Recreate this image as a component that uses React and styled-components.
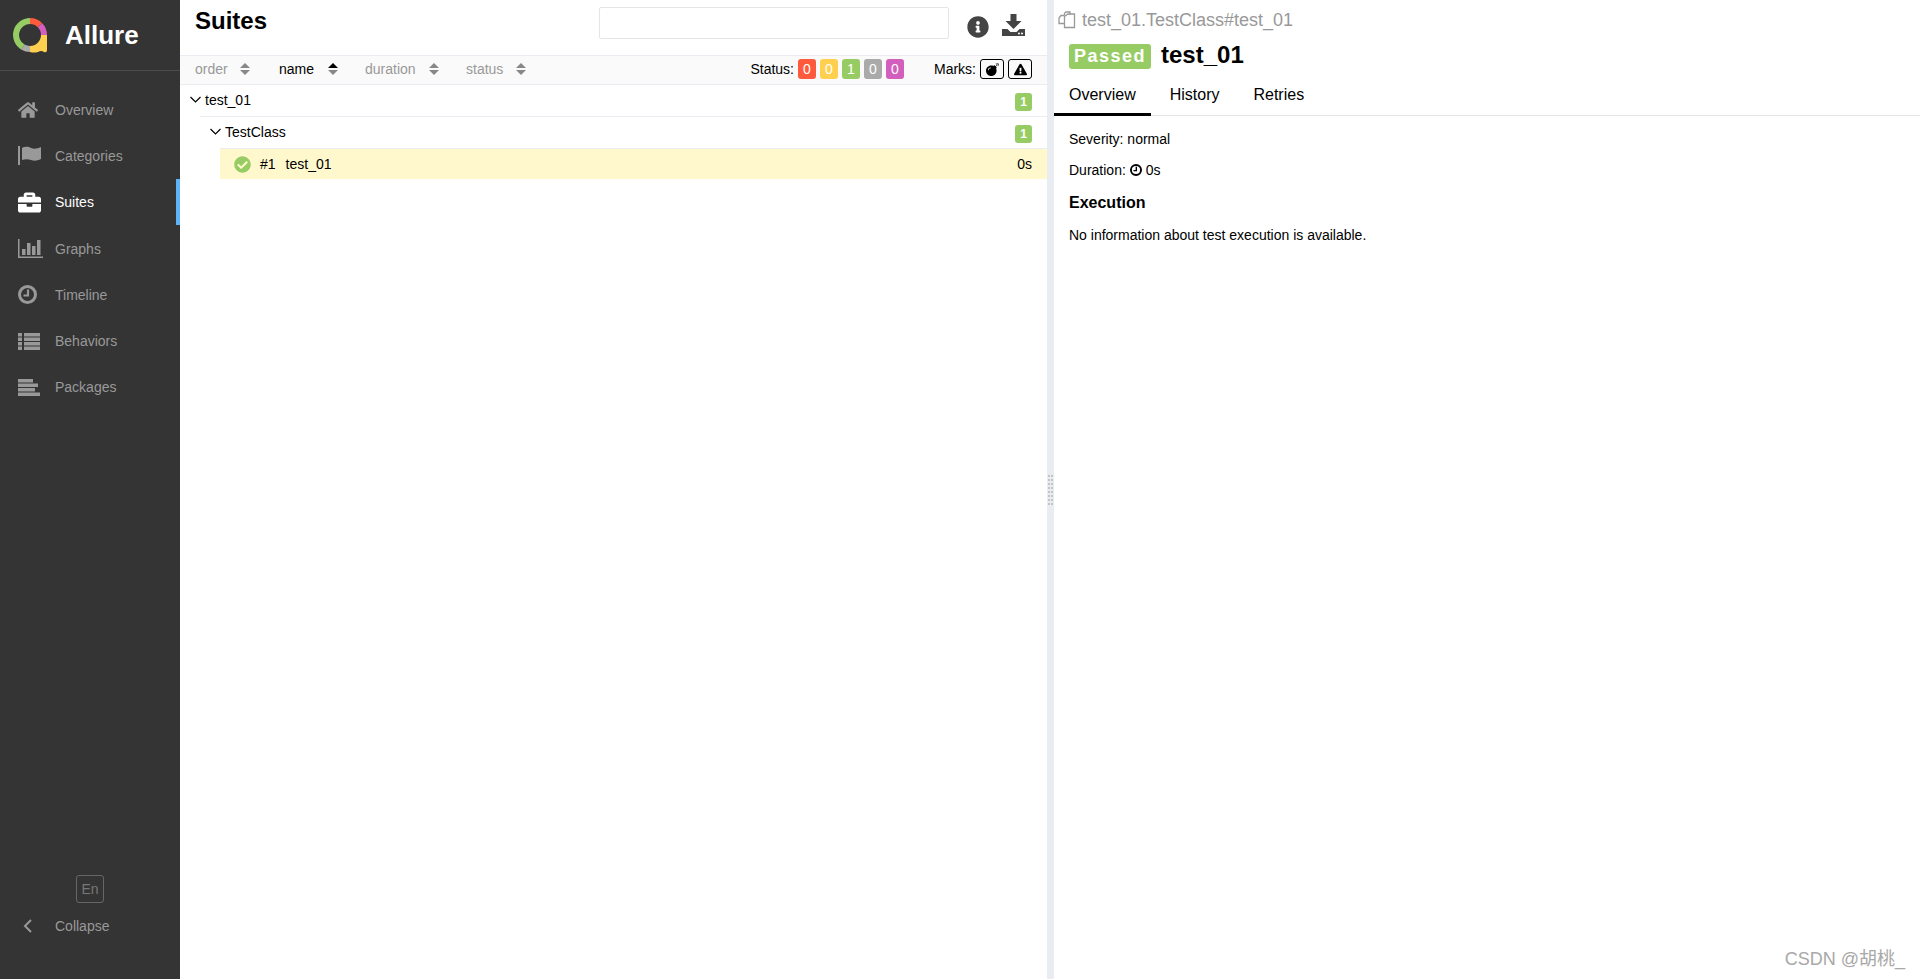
import React from 'react';
import styled, { createGlobalStyle } from 'styled-components';
import { FaHome, FaBriefcase, FaInfoCircle, FaCheckCircle, FaBomb, FaExclamationTriangle } from 'react-icons/fa';

const GlobalStyle = createGlobalStyle`
  html, body { margin: 0; padding: 0; height: 100%; }
  body { font-family: "Liberation Sans", Arial, sans-serif; font-size: 14px; color: #000; background: #fff; overflow: hidden; }
  * { box-sizing: border-box; }
`;

const Layout = styled.div`
  display: flex;
  width: 1920px;
  height: 979px;
  position: relative;
`;

const SideNav = styled.nav`
  width: 180px;
  flex: none;
  background: #343434;
  display: flex;
  flex-direction: column;
`;

const Brand = styled.div`
  height: 71px;
  border-bottom: 1px solid #4d4d4d;
  display: flex;
  align-items: center;
  padding-left: 13px;
  gap: 17px;
  color: #fff;
  font-size: 26px;
  font-weight: bold;
`;

const Menu = styled.div`
  padding-top: 15.5px;
  flex: 1;
`;

const MenuItem = styled.div`
  height: 46.3px;
  display: flex;
  align-items: center;
  padding-left: 18px;
  font-size: 14px;
  color: ${p => (p.$active ? '#fff' : '#999')};
  border-right: 4px solid ${p => (p.$active ? '#5eb3f6' : 'transparent')};
`;

const MenuIcon = styled.span`
  width: 37px;
  flex: none;
  display: flex;
  align-items: center;
  color: ${p => (p.$active ? '#fff' : '#999')};
`;

const LangBox = styled.div`
  width: 28px;
  height: 28px;
  margin: 0 auto 4px 76px;
  border: 1px solid #666;
  border-radius: 3px;
  color: #777;
  font-size: 14px;
  display: flex;
  align-items: center;
  justify-content: center;
`;

const CollapseRow = styled.div`
  height: 38px;
  margin-bottom: 34px;
  display: flex;
  align-items: center;
  padding-left: 23px;
  gap: 23px;
  color: #999;
  font-size: 14px;
`;

const Pane = styled.section`
  width: 867px;
  flex: none;
  display: flex;
  flex-direction: column;
`;

const Toolbar = styled.header`
  height: 55px;
  display: flex;
  padding-left: 15px;
`;

const PageTitle = styled.h2`
  margin: 6px 0 0;
  font-size: 24px;
  line-height: 30px;
  font-weight: bold;
  width: 404px;
`;

const SearchBox = styled.input`
  width: 350px;
  height: 32px;
  margin-top: 7px;
  border: 1px solid #e5e5e5;
  border-radius: 2px;
  background: #fff;
`;

const ToolIcons = styled.div`
  display: flex;
  align-items: flex-start;
  margin-left: 18px;
  padding-top: 14px;
  gap: 13px;
  color: #444;
`;

const InfoIcon = styled(FaInfoCircle)`
  margin-top: 2px;
`;

const SortBar = styled.div`
  height: 30px;
  background: #fafafa;
  border-top: 1px solid #e9edf1;
  border-bottom: 1px solid #e9edf1;
  display: flex;
  align-items: center;
  padding: 0 15px 2px 15px;
  color: #000;
`;

const SortCol = styled.div`
  display: flex;
  align-items: center;
  width: ${p => p.$w}px;
  color: ${p => (p.$on ? '#000' : '#999')};
  font-size: 14px;
`;

const SortArrows = styled.svg`
  width: 10px;
  height: 12px;
  margin-left: ${p => p.$gap}px;
`;

const StatusGroup = styled.div`
  margin-left: auto;
  display: flex;
  align-items: center;
  gap: 4px;
`;

const StatusPill = styled.span`
  width: 18px;
  height: 20px;
  border-radius: 3px;
  background: ${p => p.$color};
  color: #fff;
  font-size: 14px;
  display: flex;
  align-items: center;
  justify-content: center;
`;

const MarksLabel = styled.span`
  margin-left: 26px;
`;

const MarkBtn = styled.span`
  width: 24px;
  height: 20px;
  border: 1px solid #000;
  border-radius: 3px;
  display: flex;
  align-items: center;
  justify-content: center;
  font-size: 13px;
`;

const GroupRow = styled.div`
  height: 32px;
  margin-left: ${p => p.$indent}px;
  border-bottom: 1px solid #e9edf1;
  display: flex;
  align-items: center;
  padding: 0 15px 2px 0;
`;

const Chevron = styled.svg`
  width: 11px;
  height: 7px;
  margin-left: -10px;
  margin-right: 4px;
  flex: none;
`;

const Count = styled.span`
  margin-left: auto;
  margin-top: 4px;
  width: 17px;
  height: 18px;
  border-radius: 3px;
  background: #97cc64;
  color: #fff;
  font-size: 12px;
  font-weight: bold;
  display: flex;
  align-items: center;
  justify-content: center;
`;

const TestRow = styled.div`
  height: 30px;
  margin-left: 40px;
  background: #fff8cc;
  display: flex;
  align-items: center;
  padding: 0 15px 0 14px;
  color: #97cc64;
`;

const TestOrder = styled.span`
  color: #000;
  margin-left: 9px;
`;

const TestName = styled.span`
  color: #000;
  margin-left: 10px;
`;

const Duration = styled.span`
  margin-left: auto;
  color: #000;
`;

const Splitter = styled.div`
  width: 7px;
  flex: none;
  background: #e9edf1;
  display: flex;
  align-items: center;
  justify-content: center;
`;

const Grip = styled.div`
  display: grid;
  grid-template-columns: 2px 2px;
  gap: 2px 1px;
  grid-auto-rows: 2px;
  & > i { background: #c4c4c4; }
`;

const Detail = styled.section`
  flex: 1;
  display: flex;
  flex-direction: column;
`;

const Path = styled.div`
  display: flex;
  align-items: center;
  height: 24px;
  margin-top: 8px;
  padding-left: 4px;
  gap: 6px;
  font-size: 18px;
  color: #999;
`;

const TitleRow = styled.div`
  display: flex;
  align-items: center;
  height: 30px;
  margin-top: 8px;
  padding-left: 15px;
  gap: 10px;
  font-size: 24px;
  font-weight: bold;
`;

const Badge = styled.span`
  background: #97cc64;
  color: #fff;
  border-radius: 3px;
  font-size: 18px;
  letter-spacing: 1.5px;
  width: 82px;
  height: 25px;
  margin-top: 3px;
  display: flex;
  align-items: center;
  justify-content: center;
`;

const Tabs = styled.div`
  display: flex;
  height: 41px;
  margin-top: 5px;
  border-bottom: 1px solid #e5e5e5;
`;

const Tab = styled.div`
  height: 41px;
  padding: 2px 15px 0;
  display: flex;
  align-items: center;
  font-size: 16px;
  margin-right: 4px;
  border-bottom: 3px solid ${p => (p.$active ? '#000' : 'transparent')};
`;

const Body = styled.div`
  padding: 15px 15px 0;
`;

const Line = styled.div`
  height: 16px;
  line-height: 16px;
  margin-bottom: 16px;
  display: flex;
  align-items: center;
  gap: 4px;
  &:first-child { margin-bottom: 15px; }
`;

const SubHead = styled.h3`
  margin: 0 0 15px;
  font-size: 16px;
  line-height: 18px;
  font-weight: bold;
`;

const Watermark = styled.div`
  position: absolute;
  right: 15px;
  bottom: 9px;
  font-family: "Liberation Sans", "Noto Sans CJK SC", sans-serif;
  font-size: 18px;
  color: #a8a8a8;
`;

const Logo = () => (
  <svg width="35" height="35" viewBox="0 0 35 35">
    <g fill="none" strokeWidth="6">
      <path d="M17 3A14 14 0 0 0 10 29.100" stroke="#97cc64" />
      <path d="M10 29.100A14 14 0 0 0 17 31" stroke="#aaa" />
      <path d="M17 3A14 14 0 0 1 26.900 7.100" stroke="#fd5a3e" />
      <path d="M26.900 7.100A14 14 0 0 1 31 17" stroke="#d35ebe" />
    </g>
    <path d="M17 34V28A11 11 0 0 0 28 17H34V32Q34 35 31 34Q28 32 25 34Q21 35 17 34Z" fill="#ffd050" />
  </svg>
);

const FlagIcon = () => (
  <svg width="23" height="19" viewBox="0 0 23 19" fill="#999">
    <rect x="0" y="0" width="2" height="19" />
    <path d="M4 2C8 0 11 1 13 2C16 3 19 3 23 1V13C19 15 16 15 13 14C10 13 7 13 4 14Z" />
  </svg>
);

const BarsIcon = () => (
  <svg width="25" height="19" viewBox="0 0 25 19" fill="#999">
    <path d="M0 0h1.500v17.500H25V19H0z" />
    <rect x="4" y="10" width="3.500" height="6" />
    <rect x="9" y="4" width="3.500" height="12" />
    <rect x="14" y="7" width="3.500" height="9" />
    <rect x="19" y="1" width="3.500" height="15" />
  </svg>
);

const ClockIcon = ({ size, color }) => (
  <svg width={size} height={size} viewBox="0 0 19 19" fill="none" stroke={color}>
    <circle cx="9.500" cy="9.500" r="8" strokeWidth="3" />
    <path d="M10 4.500V10.500H5.500" strokeWidth="2.200" />
  </svg>
);

const ListIcon = () => (
  <svg width="22" height="17" viewBox="0 0 22 17" fill="#999">
    {[0, 4.5, 9, 13.5].map(y => (
      <g key={y}>
        <rect x="0" y={y} width="4" height="3.500" />
        <rect x="6" y={y} width="16" height="3.500" />
      </g>
    ))}
  </svg>
);

const PackagesIcon = () => (
  <svg width="22" height="17" viewBox="0 0 22 17" fill="#999">
    <rect y="0" width="15" height="3.500" />
    <rect y="4.500" width="20" height="3.500" />
    <rect y="9" width="17" height="3.500" />
    <rect y="13.500" width="22" height="3.500" />
  </svg>
);

const ExportIcon = () => (
  <svg width="23" height="22" viewBox="0 0 23 22" fill="#444">
    <path d="M8.500 0h6v7h5l-8 8-8-8h5z" />
    <path d="M0 15h5.500l3 3h6l3-3H23v7H0z" />
    <circle cx="17" cy="19.500" r="1" fill="#fff" />
    <circle cx="20" cy="19.500" r="1" fill="#fff" />
  </svg>
);

const CopyIcon = () => (
  <svg width="18" height="18" viewBox="0 0 18 18" fill="none" stroke="#999" strokeWidth="1.300">
    <path d="M6.500 4.500V2.200L8 1H12V4" />
    <path d="M6.500 4.500H3L1 7V12.500H6.500" />
    <path d="M6.500 5.500L10 3H16.500V16.500H6.500Z" />
  </svg>
);

const BackIcon = () => (
  <svg width="9" height="14" viewBox="0 0 9 14" fill="none" stroke="#999" strokeWidth="2">
    <path d="M8 1L2 7L8 13" />
  </svg>
);

const TreeChevron = () => (
  <Chevron viewBox="0 0 11 7" fill="none" stroke="#000" strokeWidth="1.200">
    <path d="M0.500 1L5.500 6L10.500 1" />
  </Chevron>
);

const Sort = ({ on, gap }) => (
  <SortArrows $gap={gap} viewBox="0 0 10 12">
    <path d="M5 0l5 5H0z" fill={on ? '#000' : '#888'} />
    <path d="M5 12l5-5H0z" fill="#888" />
  </SortArrows>
);

const navItems = [
  { label: 'Overview', icon: <FaHome size={20} /> },
  { label: 'Categories', icon: <FlagIcon /> },
  { label: 'Suites', icon: <FaBriefcase size={23} />, active: true },
  { label: 'Graphs', icon: <BarsIcon /> },
  { label: 'Timeline', icon: <ClockIcon size={19} color="#999" /> },
  { label: 'Behaviors', icon: <ListIcon /> },
  { label: 'Packages', icon: <PackagesIcon /> },
];

const sorts = [
  { label: 'order', w: 84, gap: 12 },
  { label: 'name', w: 86, gap: 14, on: true },
  { label: 'duration', w: 101, gap: 13 },
  { label: 'status', w: 70, gap: 13 },
];

const statuses = [
  ['0', '#fd5a3e'],
  ['0', '#ffd050'],
  ['1', '#97cc64'],
  ['0', '#aaa'],
  ['0', '#d35ebe'],
];

export default function App() {
  return (
    <Layout>
      <GlobalStyle />
      <SideNav>
        <Brand><Logo />Allure</Brand>
        <Menu>
          {navItems.map(item => (
            <MenuItem key={item.label} $active={item.active}>
              <MenuIcon $active={item.active}>{item.icon}</MenuIcon>
              {item.label}
            </MenuItem>
          ))}
        </Menu>
        <LangBox>En</LangBox>
        <CollapseRow><BackIcon />Collapse</CollapseRow>
      </SideNav>

      <Pane>
        <Toolbar>
          <PageTitle>Suites</PageTitle>
          <SearchBox />
          <ToolIcons>
            <InfoIcon size={22} />
            <ExportIcon />
          </ToolIcons>
        </Toolbar>
        <SortBar>
          {sorts.map(s => (
            <SortCol key={s.label} $w={s.w} $on={s.on}>
              {s.label}
              <Sort on={s.on} gap={s.gap} />
            </SortCol>
          ))}
          <StatusGroup>
            Status:
            {statuses.map(([n, c], i) => <StatusPill key={i} $color={c}>{n}</StatusPill>)}
            <MarksLabel>Marks:</MarksLabel>
            <MarkBtn><FaBomb /></MarkBtn>
            <MarkBtn><FaExclamationTriangle /></MarkBtn>
          </StatusGroup>
        </SortBar>
        <GroupRow $indent={20}>
          <TreeChevron />test_01<Count>1</Count>
        </GroupRow>
        <GroupRow $indent={40}>
          <TreeChevron />TestClass<Count>1</Count>
        </GroupRow>
        <TestRow>
          <FaCheckCircle size={17} />
          <TestOrder>#1</TestOrder>
          <TestName>test_01</TestName>
          <Duration>0s</Duration>
        </TestRow>
      </Pane>

      <Splitter>
        <Grip>{Array.from({ length: 16 }, (_, i) => <i key={i} />)}</Grip>
      </Splitter>

      <Detail>
        <Path><CopyIcon />test_01.TestClass#test_01</Path>
        <TitleRow><Badge>Passed</Badge>test_01</TitleRow>
        <Tabs>
          <Tab $active>Overview</Tab>
          <Tab>History</Tab>
          <Tab>Retries</Tab>
        </Tabs>
        <Body>
          <Line>Severity: normal</Line>
          <Line>Duration: <ClockIcon size={12} color="#000" /> 0s</Line>
          <SubHead>Execution</SubHead>
          <Line>No information about test execution is available.</Line>
        </Body>
      </Detail>

      <Watermark>CSDN @胡桃_</Watermark>
    </Layout>
  );
}
